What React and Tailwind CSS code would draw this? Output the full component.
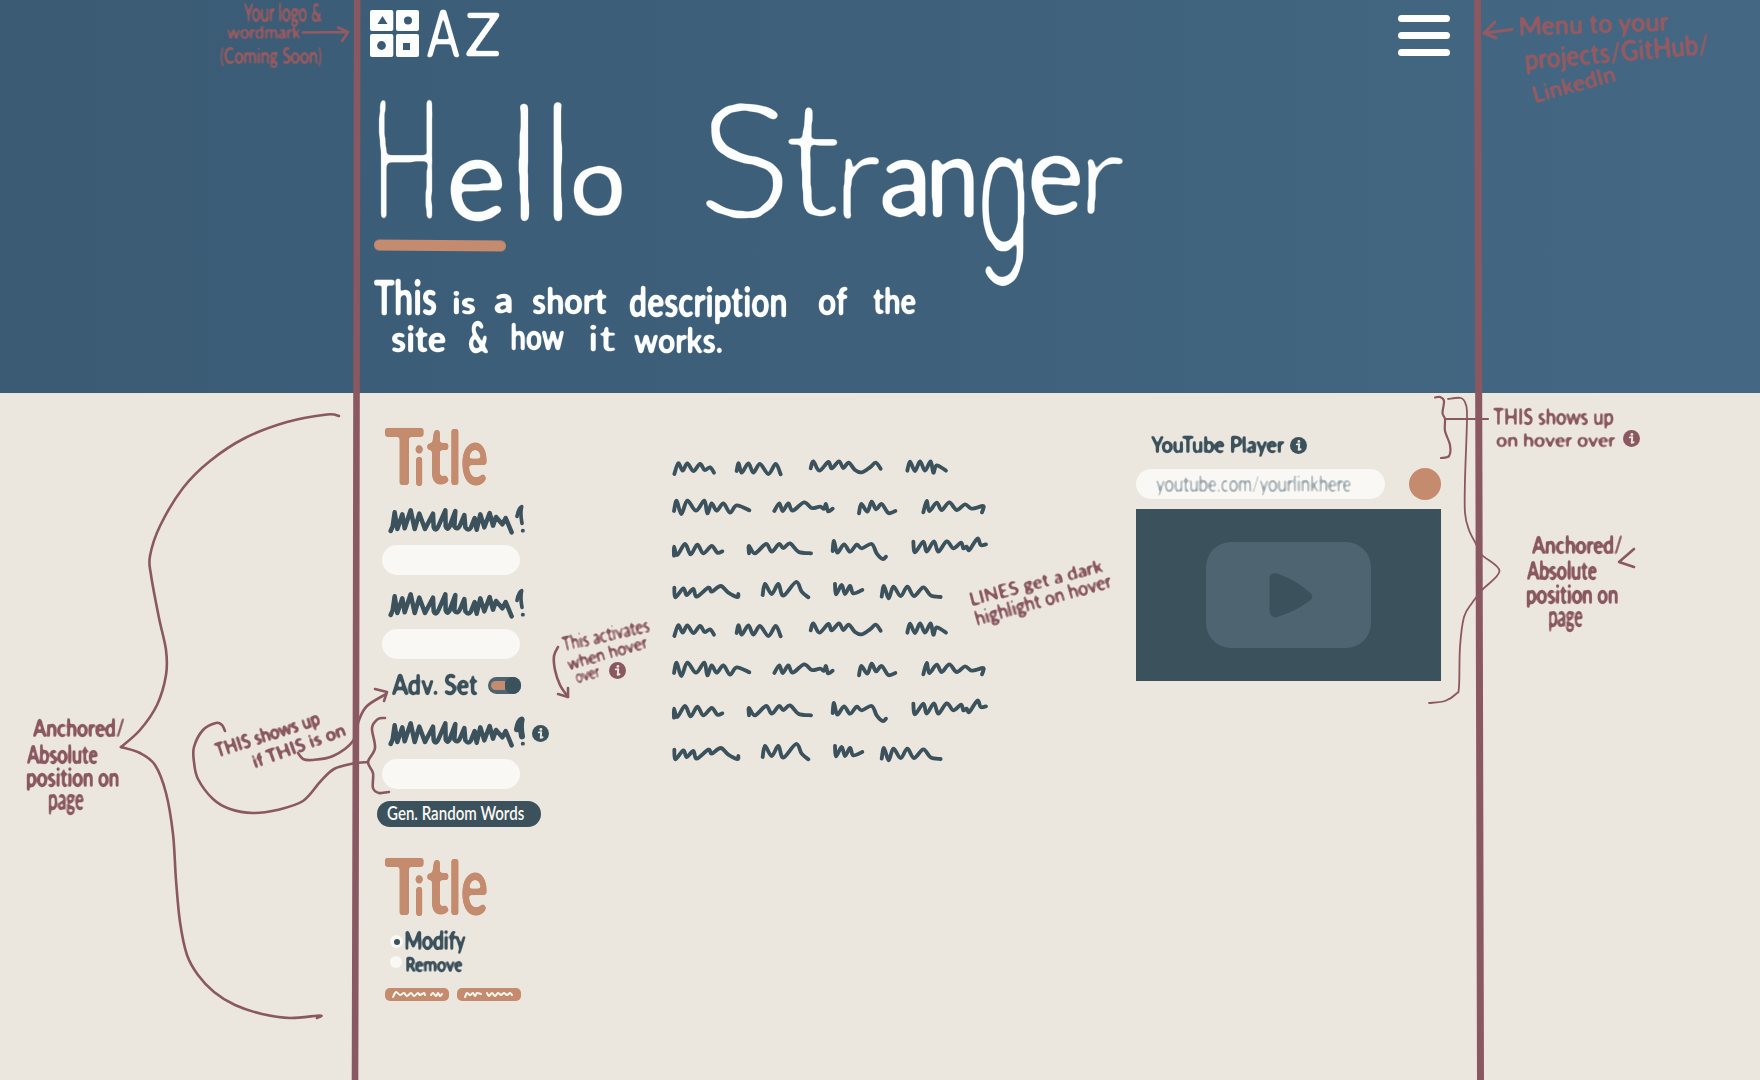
import React, { useLayoutEffect, useRef } from "react";
import clsx from "clsx";

const FACE = "font-[Lato,'Open_Sans',sans-serif] [font-variant-ligatures:none]";

/* Lettering stretched so that its ink fills the box given by the class names. */
function Ink({ children, className }) {
  const box = useRef(null);
  const inner = useRef(null);
  useLayoutEffect(() => {
    const el = inner.current;
    const cs = getComputedStyle(el);
    const ctx = document.createElement("canvas").getContext("2d");
    ctx.font = `${cs.fontStyle} ${cs.fontWeight} ${cs.fontSize} ${cs.fontFamily}`;
    const m = ctx.measureText(children);
    const fs = parseFloat(cs.fontSize);
    const lead = (fs - (m.fontBoundingBoxAscent + m.fontBoundingBoxDescent)) / 2;
    const top = lead + m.fontBoundingBoxAscent - m.actualBoundingBoxAscent;
    const kx = box.current.offsetWidth / (m.actualBoundingBoxLeft + m.actualBoundingBoxRight);
    const ky = box.current.offsetHeight / (m.actualBoundingBoxAscent + m.actualBoundingBoxDescent);
    el.style.transform = `translate(${m.actualBoundingBoxLeft * kx}px, ${-top * ky}px) scale(${kx}, ${ky})`;
  }, [children]);
  return (
    <span ref={box} className={clsx("block shrink-0", className)}>
      <span ref={inner} className="block w-max origin-top-left leading-none whitespace-pre">
        {children}
      </span>
    </span>
  );
}

/* Pen filters: soften the corners of the letters and let the strokes wander. */
function PenFilters() {
  return (
    <svg className="absolute size-0" aria-hidden="true">
      <filter id="marker" x="-5%" y="-15%" width="110%" height="140%" colorInterpolationFilters="sRGB">
        <feTurbulence type="fractalNoise" baseFrequency="0.018" numOctaves="1" seed="4" result="n" />
        <feDisplacementMap in="SourceGraphic" in2="n" scale="9" xChannelSelector="R" yChannelSelector="G" />
        <feGaussianBlur stdDeviation="2.2" />
        <feComponentTransfer>
          <feFuncA type="linear" slope="5" intercept="-1.7" />
        </feComponentTransfer>
      </filter>
      <filter id="brush" x="-5%" y="-10%" width="110%" height="120%" colorInterpolationFilters="sRGB">
        <feGaussianBlur stdDeviation="1.7" />
        <feComponentTransfer>
          <feFuncA type="linear" slope="5" intercept="-1.8" />
        </feComponentTransfer>
      </filter>
      <filter id="pen" x="-5%" y="-20%" width="110%" height="140%" colorInterpolationFilters="sRGB">
        <feGaussianBlur stdDeviation="0.8" />
        <feComponentTransfer>
          <feFuncA type="linear" slope="3" intercept="-0.7" />
        </feComponentTransfer>
      </filter>
    </svg>
  );
}
const PEN = "[filter:url(#pen)]";
const BRUSH = "[filter:url(#brush)]";
const MARKER = "[filter:url(#marker)]";

/* Smooth pen stroke through a list of points. */
function curve(str) {
  const p = str.split(" ").map((s) => s.split(",").map(Number));
  let d = `M${p[0]}`;
  for (let i = 0; i < p.length - 1; i++) {
    const a = p[i - 1] || p[i];
    const b = p[i];
    const c = p[i + 1];
    const e = p[i + 2] || c;
    d += ` C${b[0] + (c[0] - a[0]) / 6},${b[1] + (c[1] - a[1]) / 6} ${c[0] - (e[0] - b[0]) / 6},${c[1] - (e[1] - b[1]) / 6} ${c}`;
  }
  return d;
}

function Info({ className }) {
  return (
    <svg viewBox="0 0 18 18" className={clsx("size-[17px] shrink-0", className)}>
      <circle cx="9" cy="9" r="9" fill="currentColor" />
      <circle cx="9.4" cy="4.7" r="1.5" fill="#ebe6de" />
      <path d="M7.2 7.8 L9.8 7.6 L9.2 13.6 L11.2 13" fill="none" stroke="#ebe6de" strokeWidth="2" strokeLinecap="round" strokeLinejoin="round" />
    </svg>
  );
}

function Scribble({ className, bold }) {
  return (
    <svg viewBox="50 280 420 105" className={clsx("h-[35px] w-[140px]", className)} fill="none" stroke="#3b515c" strokeWidth="13.5" strokeLinecap="round" strokeLinejoin="round">
      <path d="M61 364 L67 350 73 308 81 358 96 314 103 356 121 302 133 358 147 312 164 358 188 312 190 352 Q196 368 205 348 L225 302 226 350 Q232 366 240 345 L255 304 252 350 Q262 364 270 345 L282 316 285 353 Q294 366 302 353 L313 325 319 360 330 314 342 353 358 310 368 348 377 322 396 344 406 325 424 368" />
      <path d="M440 320 Q445 294 454 291 Q449 312 455 341" strokeWidth={bold ? 18 : 11} />
      <path d="M457 363 L458 363" strokeWidth="11" />
    </svg>
  );
}

const WORDS = [
  "43,102 55,70 68,92 82,70 100,93 120,72 134,90 150,82 162,98",
  "230,93 236,70 245,98 265,70 280,98 300,72 325,102 347,72 362,103",
  "452,85 460,64 478,92 505,66 515,85 537,64 550,84 566,68 585,90 605,97 630,82 647,68 662,86",
  "742,92 750,65 765,93 780,64 795,92 812,64 820,98 830,76 858,92",
  "42,213 50,182 64,222 82,182 108,212 133,182 142,220 155,190 170,212 190,190 210,218 230,196 268,211",
  "343,213 358,190 368,213 385,190 398,212 432,187 455,204 480,200 492,206 498,192 504,214 518,206",
  "597,220 604,192 622,215 635,185 648,208 665,192 685,219 706,213",
  "790,217 800,183 808,213 830,188 845,210 868,187 890,210 915,193 935,206 968,198 970,206 966,217",
  "42,347 42,320 52,345 75,312 92,343 112,314 130,340 155,318 172,338 187,334",
  "267,340 267,318 285,340 318,312 335,335 357,312 370,324 390,310 415,335 453,340",
  "518,333 522,303 532,338 552,313 570,335 590,314 605,325 635,312 650,340 668,357 678,350",
  "760,305 765,337 790,305 800,335 822,304 835,335 860,304 880,325 903,308 910,325 920,320 928,330 952,296 962,315 978,313",
  "43,443 46,472 70,445 80,465 100,447 110,470 145,443 155,455 182,438 205,458 232,471 235,462",
  "308,465 315,432 335,462 355,432 370,467 408,426 425,455 445,472",
  "525,432 528,463 545,435 555,462 570,438 580,460 607,450",
  "665,470 672,438 686,475 700,440 722,468 742,440 762,468 790,442 812,466 842,471",
];

function Verse() {
  return (
    <svg viewBox="0 39 1050 486" className="h-[162px] w-[350px]" fill="none" stroke="#3b515c" strokeWidth="11.5" strokeLinecap="round" strokeLinejoin="round">
      {WORDS.map((w) => (
        <path key={w} d={curve(w)} />
      ))}
    </svg>
  );
}

const HELLO = [
  ["H", "w-[51px] h-[121px] mt-[1px] text-[150px] font-light"],
  ["e", "ml-[18px] w-[52px] h-[59px] mt-[62px] text-[118px] font-normal"],
  ["l", "ml-[17px] w-[8px] h-[118px] mt-[5px] text-[150px]"],
  ["l", "ml-[28px] w-[8px] h-[117px] mt-[5px] text-[150px]"],
  ["o", "ml-[13px] w-[45px] h-[51px] mt-[67px] text-[100px] font-normal"],
];
const STRANGER = [
  ["S", "ml-[83px] w-[78px] h-[115px] mt-[5px] text-[150px] font-light"],
  ["t", "ml-[8px] w-[49px] h-[109px] mt-[10px] text-[150px] font-light"],
  ["r", "ml-[5px] w-[36px] h-[62px] mt-[59px] text-[118px] font-light"],
  ["a", "ml-[2px] w-[44px] h-[57px] mt-[61px] text-[118px] font-normal"],
  ["n", "ml-[7px] w-[41px] h-[58px] mt-[61px] text-[118px] font-normal"],
  ["g", "ml-[8px] w-[42px] h-[127px] mt-[60px] text-[150px] font-light font-[Roboto,Inter,sans-serif]"],
  ["e", "ml-[8px] w-[47px] h-[59px] mt-[58px] text-[118px] font-normal"],
  ["r", "ml-[8px] w-[36px] h-[59px] mt-[58px] text-[118px] font-light"],
];
const LINE1 = [
  ["This", "w-[62px] h-[36px]"],
  ["is", "ml-[17px] mt-[10px] w-[22px] h-[24px]"],
  ["a", "ml-[19px] mt-[15px] w-[18px] h-[19px]"],
  ["short", "ml-[20px] mt-[8px] w-[75px] h-[27px]"],
  ["description", "ml-[23px] mt-[6px] w-[157px] h-[39px]"],
  ["of", "ml-[32px] mt-[8px] w-[29px] h-[28px]"],
  ["the", "ml-[25px] mt-[8px] w-[43px] h-[27px]"],
];
const LINE2 = [
  ["site", "ml-[17px] mt-[4px] w-[55px] h-[27px]"],
  ["&", "ml-[23px] w-[20px] h-[32px]"],
  ["how", "ml-[23px] mt-[1px] w-[52px] h-[28px]"],
  ["it", "ml-[25px] mt-[3px] w-[27px] h-[27px] font-normal"],
  ["works.", "ml-[18px] mt-[5px] w-[88px] h-[26px]"],
];
const TITLE = [
  ["T", "w-[39px] h-[58px]"],
  ["i", "-ml-[9px] mt-[17px] w-[8px] h-[41px]"],
  ["t", "ml-[4px] mt-[2px] w-[22px] h-[56px]"],
  ["l", "ml-[2px] mt-[1px] w-[8px] h-[56px]"],
  ["e", "ml-[3px] mt-[15px] w-[25px] h-[44px]"],
];

function Letters({ list }) {
  return list.map(([t, c], i) => (
    <Ink key={i} className={c}>
      {t}
    </Ink>
  ));
}
function Words({ list }) {
  return list.map(([t, c]) => (
    <React.Fragment key={t}>
      <Ink className={c}>{t}</Ink>{" "}
    </React.Fragment>
  ));
}

function Header() {
  return (
    <header className="h-[393px] bg-linear-to-r from-[#3b5b75] via-[#3e607a] via-50% to-[#446884] pt-[10px] pr-[310px] pl-[370px] text-[#fcfdfd]">
      <div className="flex h-[48px] items-start">
        <svg viewBox="0 0 49 47" className="h-[47px] w-[49px]">
          <rect width="23.3" height="21" rx="2" fill="currentColor" />
          <rect x="26" width="23" height="21" rx="2" fill="currentColor" />
          <rect y="24" width="23.3" height="23" rx="2" fill="currentColor" />
          <rect x="26" y="24" width="23" height="23" rx="2" fill="currentColor" />
          <g fill="#3b5b75">
            <path d="M12.5 6 L17.5 14 H7.5 Z" />
            <circle cx="38" cy="10.5" r="4" />
            <circle cx="11.5" cy="35.5" r="4.4" />
            <rect x="33" y="33" width="7" height="7" />
          </g>
        </svg>
        <div className={clsx("flex text-[58px] font-normal", PEN)}>
          <Ink className="mt-[1px] ml-[8px] h-[47px] w-[33px]">A</Ink>
          <Ink className="mt-[4px] ml-[6px] h-[43px] w-[34px]">Z</Ink>
        </div>
        <div className="mt-[5px] ml-auto flex w-[52px] flex-col gap-[10px]">
          <span className="h-[7px] rounded-full bg-white" />
          <span className="h-[7px] rounded-full bg-white" />
          <span className="h-[7px] rounded-full bg-white" />
        </div>
      </div>
      <h1 className={clsx("mt-[40px] ml-[11px] flex h-[142px] w-max items-start font-normal", MARKER)}>
        <Letters list={HELLO} />{" "}
        <Letters list={STRANGER} />
      </h1>
      <div className="ml-[4px] h-[11px] w-[132px] rotate-[0.5deg] rounded-full bg-[#c48b6e]" />
      <div className={clsx("ml-[4px] w-max text-[34px] font-bold", PEN)}>
        <p className="mt-[29px] flex h-[42px] items-start">
          <Words list={LINE1} />
        </p>
        <p className="flex items-start">
          <Words list={LINE2} />
        </p>
      </div>
    </header>
  );
}

function Field({ className }) {
  return <div className={clsx("ml-[5px] h-[30px] w-[138px] rounded-full bg-[#faf8f4]", className)} />;
}

function Title({ className }) {
  return (
    <h2 className={clsx("ml-[8px] flex h-[60px] w-[101px] items-start text-[76px] font-bold text-[#c48b6e]", BRUSH, className)}>
      <Letters list={TITLE} />
    </h2>
  );
}

function MiniButton({ d }) {
  return (
    <div className="h-[13px] w-[64px] rounded-[5px] bg-[#c48b6e]">
      <svg viewBox="0 0 64 13" className="h-[13px] w-[64px]" fill="none" stroke="#fcf8f2" strokeWidth="2" strokeLinecap="round">
        {d.map((s) => (
          <path key={s} d={curve(s)} />
        ))}
      </svg>
    </div>
  );
}

function Settings() {
  return (
    <aside className="w-[185px] shrink-0 text-[#3b515c]">
      <Title className="mt-[35px]" />
      <Scribble className="mt-[15px] ml-[10px]" />
      <Field className="mt-[7px]" />
      <Scribble className="mt-[12px] ml-[10px]" />
      <Field className="mt-[7px]" />
      <div className="mt-[14px] ml-[14px] flex h-[23px] items-start text-[26px] font-bold">
        <Ink className={clsx("h-[22px] w-[87px]", PEN)}>Adv. Set</Ink>
        <div className="mt-[4px] ml-[10px] flex h-[17px] w-[33px] items-center justify-between rounded-full bg-[#4d6470] pl-[3px]">
          <span className="h-[9px] w-[14px] rounded-l-full bg-[#c48b6e]" />
          <span className="size-[17px] rounded-full bg-[#3b515c]" />
        </div>
      </div>
      <div className="mt-[20px] ml-[10px] flex h-[37px] items-start">
        <Scribble bold />
        <Info className="mt-[9px] ml-[5px]" />
      </div>
      <Field className="mt-[6px]" />
      <div className="mt-[12px] h-[26px] w-[164px] rounded-full bg-[#3b515c] pt-[5px] pl-[10px] text-[17px] font-semibold text-[#faf8f4]">
        <Ink className={clsx("h-[14px] w-[137px]")}>Gen. Random Words</Ink>
      </div>
      <Title className="mt-[31px]" />
      <div className="mt-[12px] ml-[13px] flex h-[26px] items-start text-[22px] font-bold">
        <span className="mt-[5px] flex size-[13px] items-center justify-center rounded-full bg-[#faf8f4]">
          <span className="size-[6px] rounded-full bg-[#3b515c]" />
        </span>
        <Ink className={clsx("ml-[2px] h-[25px] w-[61px]", PEN)}>Modify</Ink>
      </div>
      <div className="ml-[13px] flex h-[20px] items-start text-[20px] font-bold">
        <span className="size-[12px] rounded-full bg-[#faf8f4]" />
        <Ink className={clsx("ml-[4px] h-[16px] w-[57px]", PEN)}>Remove</Ink>
      </div>
      <div className="mt-[12px] ml-[8px] flex gap-[8px]">
        <MiniButton d={["8,9 11,4 15,7 19,5 22,8 26,5 29,8 33,5 35,7 39,5 40,7", "46,7 48,5 51,8 53,5 55,8 57,6"]} />
        <MiniButton d={["8,9 10,5 13,7 16,5 18,8 20,5 24,6", "30,5 32,8 35,5 38,8 41,5 44,7 47,5 50,7 53,5 55,7"]} />
      </div>
    </aside>
  );
}

function Player() {
  return (
    <section className="mt-[42px] ml-[126px] w-[305px] shrink-0">
      <div className="ml-[14px] flex h-[33px] items-start text-[20px] font-bold text-[#3b515c]">
        <Ink className={clsx("h-[22px] w-[135px]", PEN)}>YouTube Player</Ink>
        <Info className="mt-[2px] ml-[5px]" />
      </div>
      <div className="flex items-center justify-between">
        <div className="h-[30px] w-[249px] rounded-full bg-[#faf8f4] pt-[7px] pl-[20px] text-[20px] text-[#9fabb0]">
          <Ink className={clsx("h-[19px] w-[195px]", PEN)}>youtube.com/yourlinkhere</Ink>
        </div>
        <span className="size-[32px] rounded-full bg-[#c48b6e]" />
      </div>
      <div className="mt-[9px] flex h-[172px] items-center justify-center bg-[#3b515c]">
        <div className="flex h-[106px] w-[165px] items-center justify-center rounded-[25px] bg-[#4e6571]">
          <svg viewBox="0 0 46 46" className="ml-[5px] size-[46px]">
            <path d="M4 5 Q5 3 9 4 Q28 11 41 23 Q43 25 40 27 Q25 38 7 43 Q4 42 4 38 Z" fill="#3b515c" stroke="#3b515c" strokeWidth="5" strokeLinejoin="round" />
          </svg>
        </div>
      </div>
    </section>
  );
}

/* Hand-written remarks pinned on top of the mock-up. */
function Note({ className, children }) {
  return <Ink className={clsx("absolute origin-bottom-left", PEN, className)}>{children}</Ink>;
}

function Annotations() {
  return (
    <div className="pointer-events-none absolute inset-0 text-[19px] font-bold text-[#8a5860]">
      <svg viewBox="0 0 1760 1080" className="absolute inset-0 h-[1080px] w-[1760px]" fill="none" stroke="currentColor" strokeWidth="2.6" strokeLinecap="round" strokeLinejoin="round">
        <path d="M357.2 -5 L356 700 L355 1085" strokeWidth="6.6" />
        <path d="M1477.5 -5 L1479 500 L1480.5 1085" strokeWidth="7" />
        <path d={curve("339,416 327,414.5 287,422 245,438 210,461 183,488 160,526 150,556 151,575 159,618 166,650 166,675 157,705 140,730 121,747")} />
        <path d={curve("121,747 140,753 155,765 166,793 173,834 176,880 180,922 187,955 198,975 214,992 235,1005 262,1014 290,1018 320,1015.5 317,1018")} />
        <path d={curve("225,731 222,725 216,723 203,730 194,747 194,762 198,779 213,799 230,809 253,813 277,810 303,801 320,782 334,769 353,763.5 368,762")} />
        <path d={curve("385,718 378,719 372,728 375,748 368,762 373,773 373,788 379,793 389,792")} />
        <path d={curve("298,753 303,759 312,760 333,756 353,741 359,720 367,706 386,694")} />
        <path d="M375 689 L387 692 L384 701" />
        <g strokeWidth="2.2">
          <path d={curve("1435,397.5 1440,397 1444,401 1442.5,413 1445,419 1445,431 1450,445 1449,456 1441,458")} />
          <path d="M1446 419 H1488" />
          <path d={curve("1448,399 1461,398 1466,405 1467,420 1465,480 1465,513 1469,530 1476,544 1482,555 1499.5,571 1482,590 1472,603 1464,617 1460,647 1459,687 1456,694 1445,701 1429,703")} strokeWidth="1.8" />
        </g>
        <path d="M1634 549 L1619 562 L1634 567" />
        <path d={curve("558,647 554,656 555,670 560,685 568,697")} />
        <path d="M558 694 L568 697 L568 688" />
        <g stroke="#945a61">
          <path d="M303 32.5 L347 32 M338 27.5 L348 32 L342 41" />
          <path d="M1512 29.5 L1485 33 M1495 22 L1484 33 L1496 38" strokeWidth="3" />
        </g>
      </svg>

      <div className="font-semibold text-[#945a61]">
        <Note className="top-[4px] left-[243px] h-[22px] w-[80px] text-[20px]">Your logo &</Note>
        <Note className="top-[25px] left-[227px] h-[14px] w-[74px]">wordmark</Note>
        <Note className="top-[45px] left-[220px] h-[22px] w-[102px]">(Coming Soon)</Note>
        <Note className="top-[16px] left-[1521px] h-[25px] w-[149px] rotate-[-2deg] text-[24px]">Menu to your</Note>
        <Note className="top-[48px] left-[1527px] h-[27px] w-[184px] rotate-[-5deg] text-[24px]">projects/GitHub/</Note>
        <Note className="top-[86px] left-[1536px] h-[18px] w-[84px] rotate-[-15deg] text-[22px]">LinkedIn</Note>
      </div>

      <Note className="top-[719px] left-[32px] h-[19px] w-[93px]">Anchored/</Note>
      <Note className="top-[745px] left-[26px] h-[19px] w-[72px]">Absolute</Note>
      <Note className="top-[768px] left-[27px] h-[23px] w-[92px]">position on</Note>
      <Note className="top-[794px] left-[49px] h-[21px] w-[35px] font-semibold">page</Note>

      <Note className="top-[742px] left-[219px] h-[20px] w-[109px] rotate-[-18deg] text-[18px]">THIS shows up</Note>
      <Note className="top-[754px] left-[255px] h-[15px] w-[99px] rotate-[-20deg] text-[18px]">if THIS is on</Note>

      <Note className="top-[636px] left-[564px] h-[16px] w-[89px] rotate-[-13deg] text-[17px] font-semibold">This activates</Note>
      <Note className="top-[657px] left-[569px] h-[14px] w-[84px] rotate-[-16deg] text-[17px] font-semibold">when hover</Note>
      <Note className="top-[674px] left-[577px] h-[10px] w-[26px] rotate-[-16deg] text-[17px] font-semibold">over</Note>
      <Info className="absolute top-[662px] left-[609px]" />

      <Note className="top-[592px] left-[973px] h-[17px] w-[137px] rotate-[-14.5deg] text-[18px] font-semibold">LINES get a dark</Note>
      <Note className="top-[611px] left-[979px] h-[18px] w-[141px] rotate-[-16deg] text-[18px] font-semibold">highlight on hover</Note>

      <Note className="top-[409px] left-[1493px] h-[20px] w-[120px] font-semibold">THIS shows up</Note>
      <Note className="top-[433px] left-[1496px] h-[14px] w-[120px] font-semibold">on hover over</Note>
      <Info className="absolute top-[430px] left-[1623px]" />

      <Note className="top-[536px] left-[1531px] h-[19px] w-[92px]">Anchored/</Note>
      <Note className="top-[561px] left-[1526px] h-[19px] w-[71px]">Absolute</Note>
      <Note className="top-[585px] left-[1527px] h-[23px] w-[91px]">position on</Note>
      <Note className="top-[611px] left-[1549px] h-[21px] w-[34px] font-semibold">page</Note>
    </div>
  );
}

export default function App() {
  return (
    <div className={clsx("relative h-[1080px] w-[1760px] overflow-hidden bg-[#ebe6de]", FACE)}>
      <PenFilters />
      <Header />
      <main className="flex items-start pl-[377px]">
        <Settings />
        <div className="mt-[60px] ml-[98px] flex shrink-0 flex-col">
          <Verse />
          <Verse />
        </div>
        <Player />
      </main>
      <Annotations />
    </div>
  );
}
